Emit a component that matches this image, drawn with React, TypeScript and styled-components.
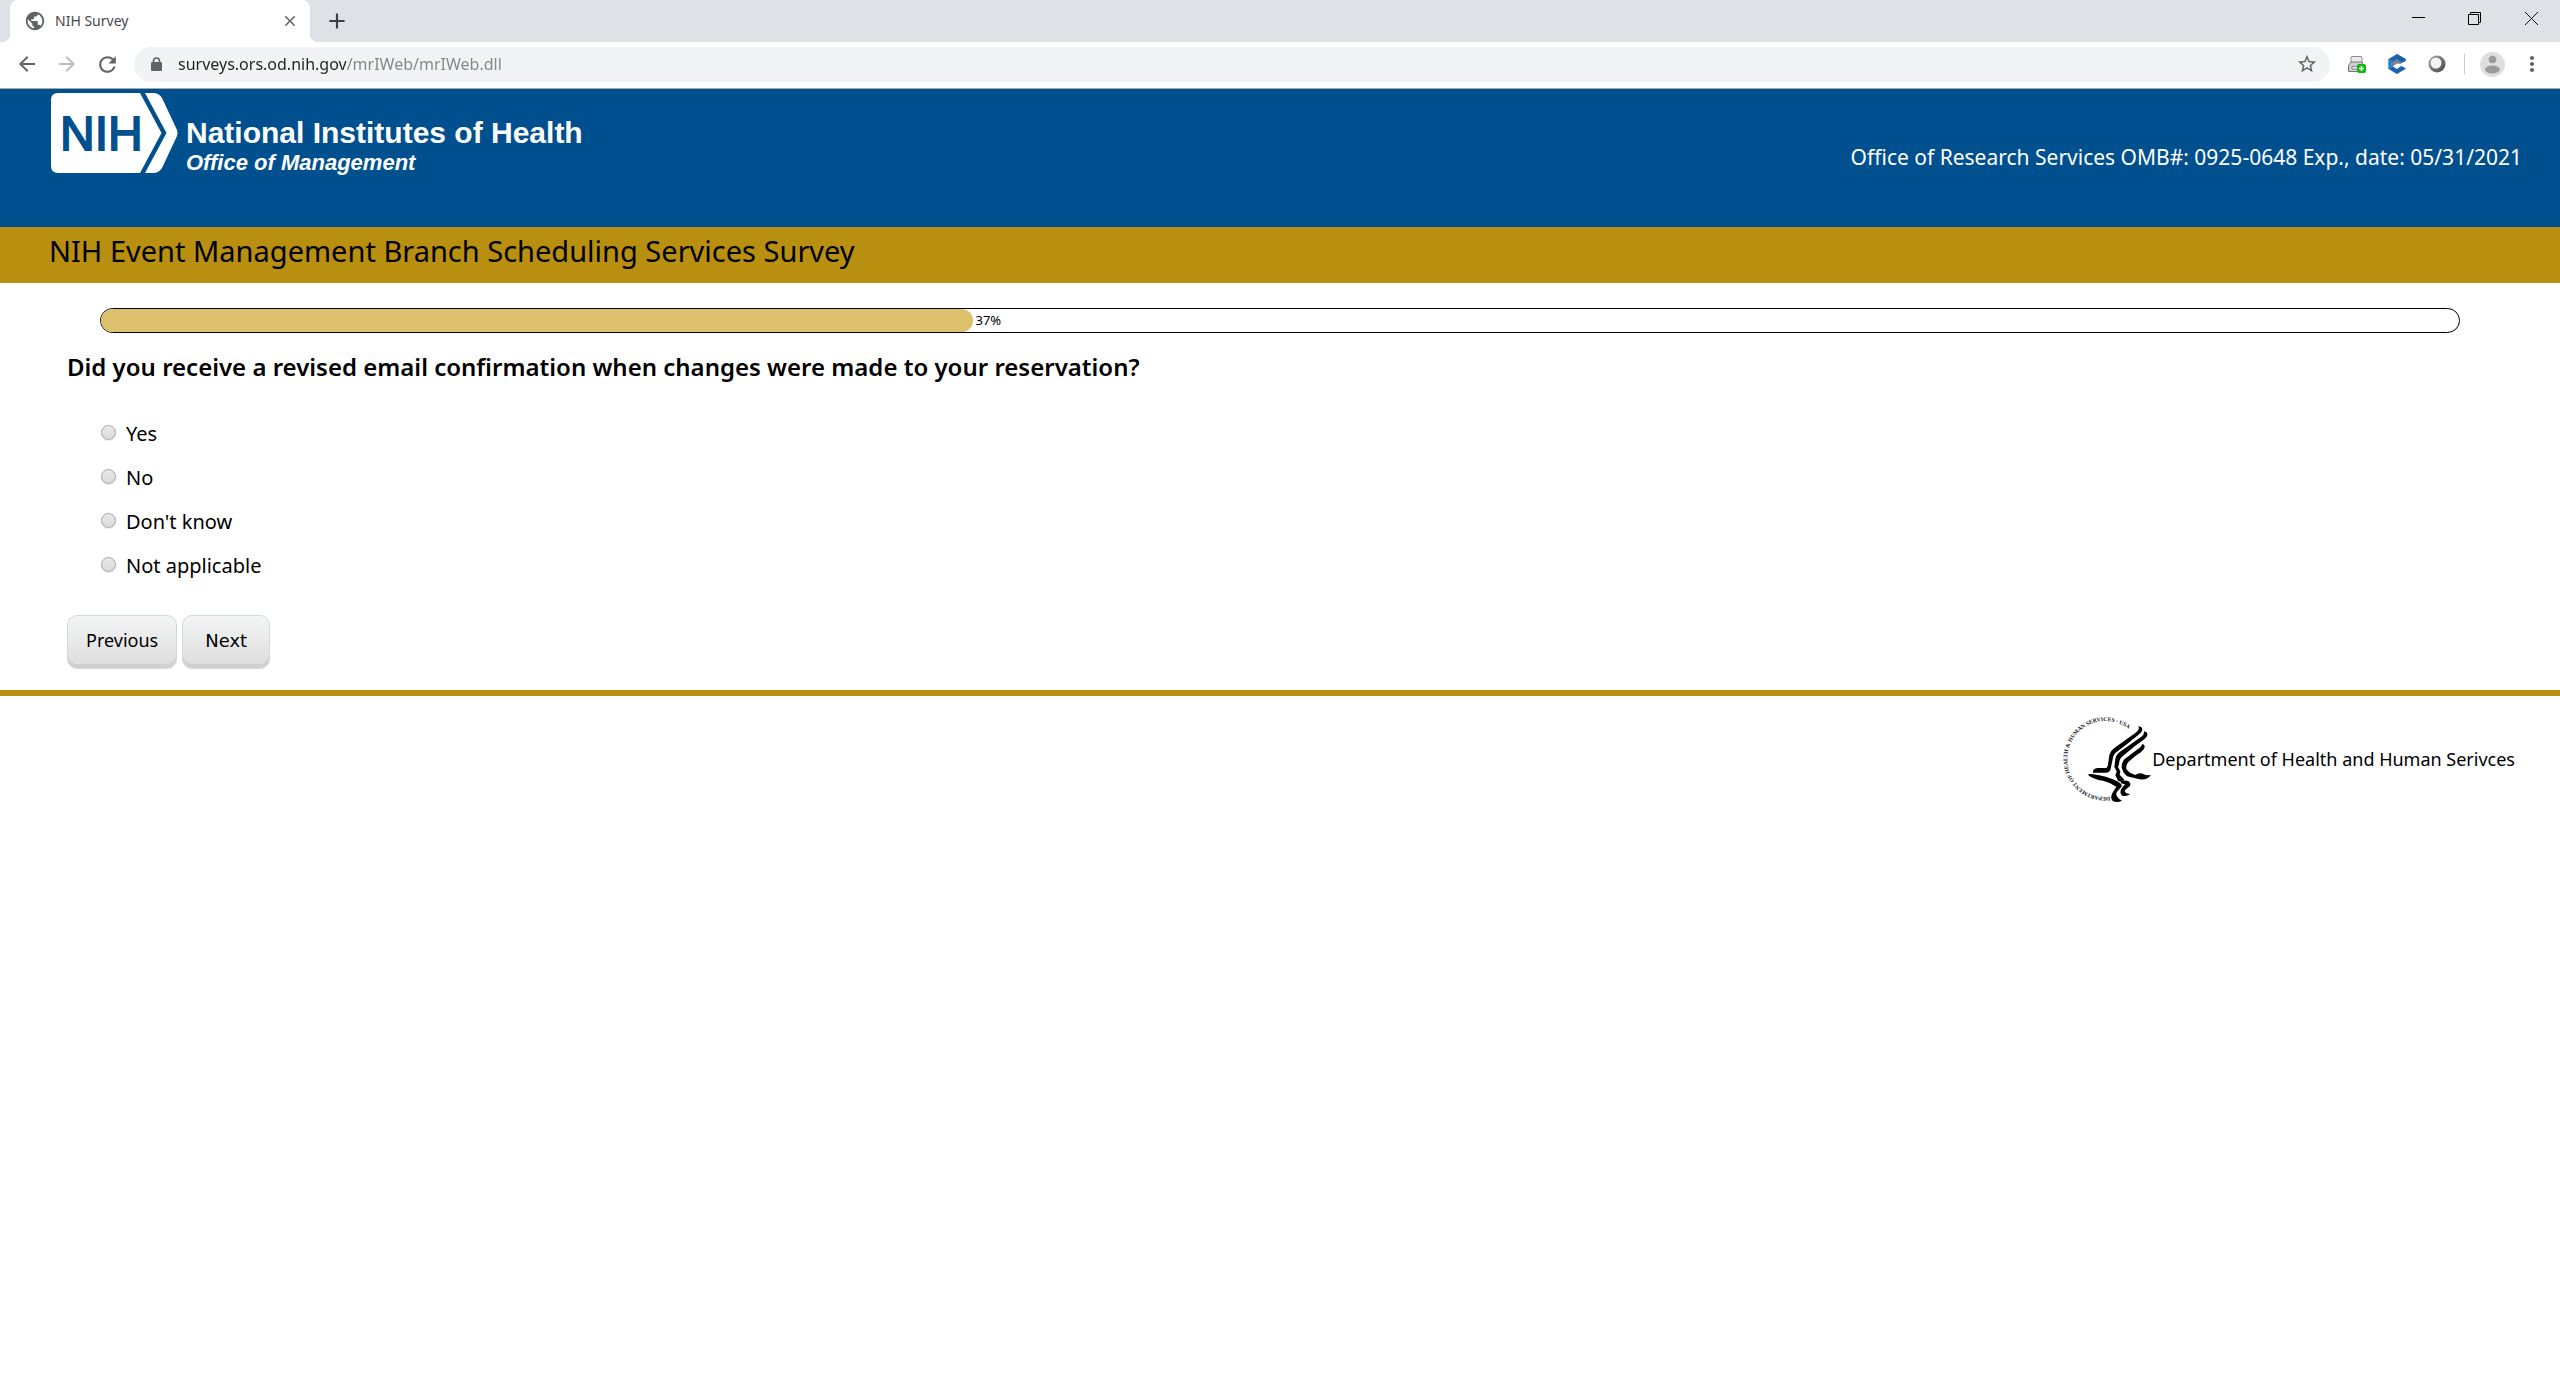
import React, { useState } from "react";
import styled, { createGlobalStyle, css } from "styled-components";
import {
  MdAdd,
  MdArrowBack,
  MdArrowForward,
  MdClose,
  MdMoreVert,
  MdPublic,
  MdRefresh,
  MdStarBorder,
} from "react-icons/md";

const color = {
  blue: "#005090",
  gold: "#b98f10",
  fill: "#dcc06c",
  strip: "#dee1e6",
  field: "#f1f3f4",
  icon: "#5f6368",
};

const sans = `"Noto Sans", "Open Sans", sans-serif`;

const GlobalStyle = createGlobalStyle`
  *, *::before, *::after { box-sizing: border-box; }
  body { margin: 0; background: #fff; color: #000; font-family: ${sans}; }
  button, input { font-family: inherit; }
`;

/* ---------- browser window ---------- */

const TabStrip = styled.div`
  display: flex;
  align-items: stretch;
  height: 42px;
  padding-left: 10px;
  background: ${color.strip};
`;

const flare = css`
  content: "";
  position: absolute;
  bottom: 0;
  width: 8px;
  height: 8px;
`;

const Tab = styled.div`
  position: relative;
  display: flex;
  align-items: center;
  width: 300px;
  padding: 0 11px 0 14px;
  border-radius: 8px 8px 0 0;
  background: #fff;
  color: ${color.icon};
  &::before {
    ${flare}
    left: -8px;
    background: radial-gradient(circle at 0 0, transparent 8px, #fff 8px);
  }
  &::after {
    ${flare}
    right: -8px;
    background: radial-gradient(circle at 100% 0, transparent 8px, #fff 8px);
  }
`;

const TabTitle = styled.span`
  flex: 1;
  padding-left: 9px;
  color: #45494d;
  font-size: 14px;
  line-height: 20px;
`;

const IconButton = styled.button<{ $w?: number; $faded?: boolean }>`
  display: flex;
  flex: none;
  align-items: center;
  justify-content: center;
  width: ${(p) => p.$w ?? 40}px;
  padding: 0;
  border: 0;
  background: none;
  color: ${(p) => (p.$faded ? "#babcbe" : color.icon)};
`;

const NewTab = styled(IconButton)`
  margin-left: 7px;
  color: #3c4043;
`;

const WindowControls = styled.div`
  display: flex;
  margin-left: auto;
  padding-bottom: 6px;
`;

const Toolbar = styled.div`
  display: flex;
  align-items: center;
  height: 47px;
  padding: 0 8px 2px 7px;
  border-bottom: 1px solid #a9a9a9;
  background: #fff;
`;

const Omnibox = styled.div`
  display: flex;
  flex: 1;
  align-items: center;
  height: 35px;
  margin: 0 7px;
  padding: 0 12px 0 17px;
  border-radius: 18px;
  background: ${color.field};
  color: ${color.icon};
`;

const Address = styled.input`
  flex: 1;
  min-width: 0;
  margin-left: 16px;
  padding: 0;
  border: 0;
  outline: 0;
  background: linear-gradient(to right, #202124 168px, #80868b 168px);
  background-clip: text;
  -webkit-background-clip: text;
  color: transparent;
  font-size: 16px;
  line-height: 24px;
`;

const Separator = styled.span`
  width: 1px;
  height: 20px;
  margin: 0 7px;
  background: #c8cacd;
`;

/* ---------- survey page ---------- */

const Header = styled.header`
  display: flex;
  justify-content: space-between;
  height: 138px;
  padding: 4px 38px 0 51px;
  background: ${color.blue};
  color: #fff;
`;

const Brand = styled.a`
  display: flex;
  align-items: flex-start;
  gap: 7px;
  color: inherit;
  text-decoration: none;
`;

const BrandText = styled.span`
  display: flex;
  flex-direction: column;
  padding-top: 24px;
  font-family: "Liberation Sans", Arial, sans-serif;
  font-weight: 700;
`;

const BrandName = styled.span`
  font-size: 30px;
  line-height: 32px;
`;

const BrandOffice = styled.span`
  font-size: 22px;
  font-style: italic;
  line-height: 28px;
`;

const Notice = styled.p`
  margin: 0;
  padding-top: 50px;
  font-size: 21px;
  line-height: 28px;
`;

const TitleBar = styled.h1`
  margin: 0;
  padding: 4px 49px 12px;
  background: ${color.gold};
  font-size: 29px;
  font-weight: 400;
  line-height: 40px;
`;

const Form = styled.form`
  display: block;
  padding: 25px 67px 21px;
`;

const Progress = styled.div`
  display: flex;
  align-items: center;
  height: 25px;
  margin: 0 33px;
  border: 1px solid #000;
  border-radius: 13px;
  overflow: hidden;
`;

const ProgressFill = styled.div`
  height: 100%;
  margin-right: 2px;
  border-radius: 0 12px 12px 0;
  background: ${color.fill};
`;

const ProgressText = styled.span`
  padding-bottom: 2px;
  font-size: 13px;
  line-height: 18px;
`;

const Question = styled.fieldset`
  min-width: 0;
  margin: 0;
  padding: 0;
  border: 0;
`;

const QuestionText = styled.legend`
  padding: 18px 0 29px;
  font-size: 24px;
  font-weight: 600;
  line-height: 32px;
`;

const Option = styled.label`
  display: flex;
  align-items: center;
  gap: 10px;
  width: fit-content;
  height: 44px;
  padding-left: 34px;
  font-size: 20px;
  line-height: 28px;
`;

const Radio = styled.input`
  appearance: none;
  width: 15px;
  height: 15px;
  margin: 0 0 3px;
  border: 1px solid #a6a6a6;
  border-radius: 50%;
  background: linear-gradient(#e9e9e9, #dadada);
  box-shadow: 0 1px 1px #e6e6e6;
  &:checked {
    background: radial-gradient(circle, #444 3px, #e0e0e0 4px);
  }
`;

const Actions = styled.div`
  display: flex;
  gap: 5px;
  padding-top: 27px;
`;

const SurveyButton = styled.button<{ $primary?: boolean }>`
  height: 54px;
  padding: ${(p) => (p.$primary ? "0 22px 2px" : "0 18px 4px")};
  border: 1px solid #d4d8d8;
  border-radius: 10px;
  background: linear-gradient(#f3f5f5, #dedcdd);
  box-shadow: inset 0 -4px 0 #d0d0d0;
  color: #000;
  font-family: ${(p) => (p.$primary ? `"DejaVu Sans", Verdana, sans-serif` : sans)};
  font-size: 18px;
  line-height: 24px;
`;

const Footer = styled.footer`
  display: flex;
  justify-content: flex-end;
  align-items: flex-start;
  padding: 18px 45px 18px;
  border-top: 6px solid ${color.gold};
`;

const FooterText = styled.span`
  padding-top: 32px;
  font-size: 18px;
  line-height: 26px;
`;

/* ---------- drawings ---------- */

const NihMark = () => (
  <svg width="128" height="80" viewBox="0 0 128 80" aria-label="NIH" role="img">
    <path fill="#fff" d="M7 0H89L110.500 40 89 80H7Q0 80 0 73V7Q0 0 7 0Z" />
    <path fill="#fff" d="M94 0H102Q108 0 111 5L126 37Q127 40 126 43L111 75Q108 80 102 80H94L115.500 40Z" />
    <text
      x="9"
      y="57"
      fill={color.blue}
      stroke={color.blue}
      strokeWidth="1.800"
      fontFamily="Liberation Sans, Arial, sans-serif"
      fontSize="48"
      fontWeight="400"
    >
      NIH
    </text>
  </svg>
);

const HhsSeal = () => (
  <svg width="90" height="90" viewBox="24 30 270 270" role="img" aria-label="HHS seal">
    <path id="seal-ring" d="M168 278A114 114 0 1 1 252 107" fill="none" />
    <text
      fontFamily="Liberation Serif, serif"
      fontSize="17"
      fontWeight="700"
      fill="#111"
      textRendering="geometricPrecision"
    >
      <textPath href="#seal-ring">DEPARTMENT OF HEALTH &amp; HUMAN SERVICES · USA</textPath>
    </text>
    <g fill="#000">
      <path d="M253 67Q265 67 265 78C263 87 246 98 228 113L184 147Q176 155 175 170L170 194Q168 206 154 206L116 206Q118 193 130 192L154 192Q160 192 162 182L166 153Q168 142 180 133L247 85Q258 77 253 67Z" />
      <path d="M270 82Q282 84 280 94C276 106 254 117 232 135L202 160Q196 166 195 180L192 189 199 202 197 212 210 226 204 235 192 230 184 213 188 203 181 188 184 166Q185 153 198 143L262 98Q272 91 270 82Z" />
      <path d="M264 120Q275 122 271 132C264 146 247 152 230 168 219 177 216 184 217 196L228 206 244 213Q254 206 266 209 278 215 291 213C281 227 265 229 250 224L219 217 209 206 203 191Q202 177 211 166L252 135Q264 128 264 120Z" />
      <path d="M101 212Q108 208 126 212C151 215 183 226 197 236Q207 243 201 250L188 265Q181 278 204 290 190 297 178 292C169 286 171 273 177 264L187 248Q171 236 147 230 118 226 101 212Z" />
      <path d="M201 228L222 231Q232 237 228 246L214 257Q207 267 229 270 217 279 205 275C197 269 199 260 203 253L213 241 201 238Z" />
    </g>
  </svg>
);

const LockIcon = () => (
  <svg width="11" height="15" viewBox="0 0 11 15">
    <path d="M2.500 6V4Q2.500 1 5.500 1T8.500 4V6" fill="none" stroke={color.icon} strokeWidth="1.600" />
    <rect y="5" width="11" height="9" rx="1.200" fill={color.icon} />
  </svg>
);

const MinimizeIcon = () => (
  <svg width="13" height="13" viewBox="0 0 13 13">
    <path d="M0 5.500H13" stroke="#000" />
  </svg>
);

const RestoreIcon = () => (
  <svg width="13" height="13" viewBox="0 0 13 13" fill="none" stroke="#000">
    <path d="M.5 2.500H10.500V12.500H.5ZM2.500 2.500V.5H12.500V10.500H10.500" />
  </svg>
);

const CloseIcon = () => (
  <svg width="13" height="13" viewBox="0 0 13 13" stroke="#111">
    <path d="M0 0L13 13M13 0L0 13" />
  </svg>
);

const PrinterIcon = () => (
  <svg width="18" height="17" viewBox="0 0 18 17">
    <path d="M3 7V1.500Q3 .5 4 .5H13Q14 .5 14 1.500V7" fill="#e9e9e9" stroke="#8b8b8b" />
    <path d="M3 6L.5 9.500V15.500H15.500V9.500L14 6Z" fill="#cfcfcf" stroke="#777" />
    <path d="M4 10.500H12V13H4Z" fill="#f5f5f5" stroke="#888" />
    <rect x="9" y="8" width="9" height="9" rx="2" fill="#12b812" />
    <path d="M13.500 10V15M11 12.500H16" stroke="#fff" strokeWidth="1.500" />
  </svg>
);

const CubeIcon = () => (
  <svg width="18" height="20" viewBox="0 0 18 20">
    <path d="M9 0L17.500 5V7L13 9 9 6.500 5 9V12.500L9 15 13 12 17.500 14V15L9 20 .5 15V5Z" fill="#1a66b5" />
    <path d="M9 0L17.500 5V7L13 9 9 6.500Z" fill="#1460ae" />
    <path d="M9 5L13 8V10L9 9.500 5 12V7.500Z" fill="#7c8087" />
    <path d="M.5 5L5 7.500V12.500L.5 15Z" fill="#3d7fc4" />
  </svg>
);

const RingIcon = () => (
  <svg width="18" height="18" viewBox="0 0 18 18">
    <defs>
      <linearGradient id="ring" x1="0" y1="0" x2="1" y2="1">
        <stop offset="0" stopColor="#a8a8a8" />
        <stop offset="1" stopColor="#444" />
      </linearGradient>
    </defs>
    <circle cx="9" cy="9" r="8.500" fill="url(#ring)" />
    <circle cx="8" cy="8" r="5.500" fill="#f2f2f2" />
  </svg>
);

const AvatarIcon = () => (
  <svg width="25" height="25" viewBox="0 0 25 25">
    <circle cx="12.500" cy="12.500" r="12.500" fill="#dedede" />
    <circle cx="12.500" cy="7.500" r="3.800" fill="#9b9b9b" />
    <ellipse cx="12.500" cy="17.500" rx="7.500" ry="4" fill="#9b9b9b" />
  </svg>
);

/* ---------- page ---------- */

const options = ["Yes", "No", "Don't know", "Not applicable"];
const percent = 37;

export default function App() {
  const [answer, setAnswer] = useState<string | null>(null);
  const [url, setUrl] = useState("surveys.ors.od.nih.gov/mrIWeb/mrIWeb.dll");

  return (
    <>
      <GlobalStyle />
      <TabStrip>
        <Tab>
          <MdPublic size={22} />
          <TabTitle>NIH Survey</TabTitle>
          <IconButton $w={18} aria-label="Close tab">
            <MdClose size={18} />
          </IconButton>
        </Tab>
        <NewTab aria-label="New tab">
          <MdAdd size={26} />
        </NewTab>
        <WindowControls>
          <IconButton $w={56} aria-label="Minimize">
            <MinimizeIcon />
          </IconButton>
          <IconButton $w={56} aria-label="Restore">
            <RestoreIcon />
          </IconButton>
          <IconButton $w={58} aria-label="Close window">
            <CloseIcon />
          </IconButton>
        </WindowControls>
      </TabStrip>
      <Toolbar>
        <IconButton aria-label="Back">
          <MdArrowBack size={24} />
        </IconButton>
        <IconButton $faded aria-label="Forward">
          <MdArrowForward size={24} />
        </IconButton>
        <IconButton aria-label="Reload">
          <MdRefresh size={25} />
        </IconButton>
        <Omnibox>
          <LockIcon />
          <Address aria-label="Address" value={url} onChange={(e) => setUrl(e.target.value)} />
          <IconButton $w={22} aria-label="Bookmark">
            <MdStarBorder size={22} />
          </IconButton>
        </Omnibox>
        <IconButton aria-label="Print">
          <PrinterIcon />
        </IconButton>
        <IconButton aria-label="Cube extension">
          <CubeIcon />
        </IconButton>
        <IconButton aria-label="Ring extension">
          <RingIcon />
        </IconButton>
        <Separator />
        <IconButton aria-label="Profile">
          <AvatarIcon />
        </IconButton>
        <IconButton aria-label="Menu">
          <MdMoreVert size={24} />
        </IconButton>
      </Toolbar>

      <Header>
        <Brand href="#">
          <NihMark />
          <BrandText>
            <BrandName>National Institutes of Health</BrandName>
            <BrandOffice>Office of Management</BrandOffice>
          </BrandText>
        </Brand>
        <Notice>Office of Research Services OMB#: 0925-0648 Exp., date: 05/31/2021</Notice>
      </Header>
      <TitleBar>NIH Event Management Branch Scheduling Services Survey</TitleBar>

      <Form onSubmit={(e) => e.preventDefault()}>
        <Progress role="progressbar" aria-label="Progress" aria-valuenow={percent}>
          <ProgressFill style={{ width: `${percent}%` }} />
          <ProgressText>{percent}%</ProgressText>
        </Progress>
        <Question>
          <QuestionText>
            Did you receive a revised email confirmation when changes were made to your reservation?
          </QuestionText>
          {options.map((name) => (
            <Option key={name}>
              <Radio
                type="radio"
                name="confirmation"
                value={name}
                checked={answer === name}
                onChange={() => setAnswer(name)}
              />
              {name}
            </Option>
          ))}
        </Question>
        <Actions>
          <SurveyButton type="button">Previous</SurveyButton>
          <SurveyButton type="submit" $primary>
            Next
          </SurveyButton>
        </Actions>
      </Form>

      <Footer>
        <HhsSeal />
        <FooterText>Department of Health and Human Serivces</FooterText>
      </Footer>
    </>
  );
}
